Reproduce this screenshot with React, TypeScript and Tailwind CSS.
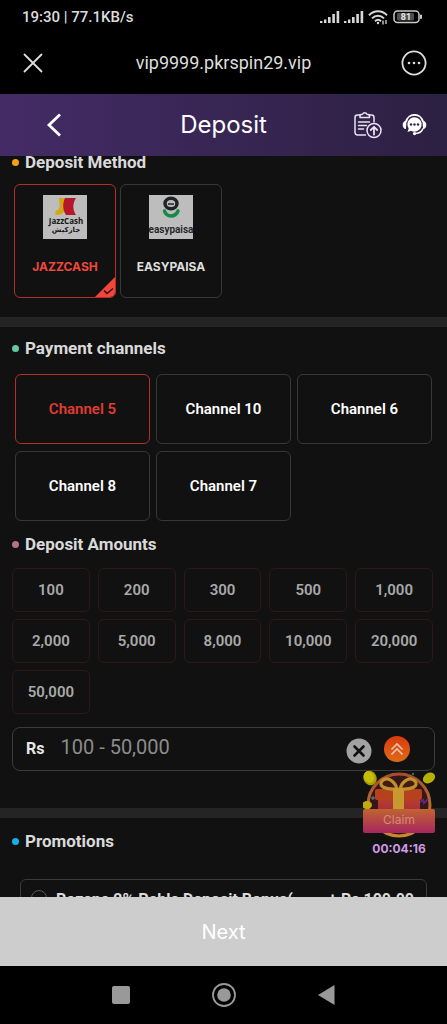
import { useState } from 'react';

const channels = ['Channel 5', 'Channel 10', 'Channel 6', 'Channel 8', 'Channel 7'];

const amounts = [100, 200, 300, 500, 1000, 2000, 5000, 8000, 10000, 20000, 50000];

function SignalIcon() {
  return (
    <svg width="20" height="14" viewBox="0 0 20 14" fill="#d8d8d8">
      <rect x="0" y="11" width="2.4" height="2" />
      <rect x="4" y="9.5" width="2.4" height="3.5" />
      <rect x="8" y="7" width="2.6" height="6" />
      <rect x="12.3" y="4" width="2.6" height="9" />
      <rect x="16.6" y="1" width="2.6" height="12" />
    </svg>
  );
}

function StatusBar() {
  return (
    <div className="flex h-9 items-center justify-between bg-black pr-6 pb-[2px] pl-[22px]">
      <span className="text-[15px] font-medium text-[#dcdcdc]">19:30 | 77.1KB/s</span>
      <div className="flex items-center gap-1">
        <SignalIcon />
        <SignalIcon />
        <svg width="20" height="15" viewBox="0 0 20 15" fill="none" stroke="#d8d8d8" strokeWidth="2">
          <path d="M1 5.2C6-.2 14-.2 19 5.2" />
          <path d="M4 8.4c3.5-3.6 8.500-3.600 12 0" />
          <path d="M7 11.300c1.800-1.800 4.200-1.800 6 0" />
          <circle cx="10" cy="13" r="1.200" fill="#d8d8d8" stroke="none" />
          <path d="M15 10.500v4M18 10v4" strokeWidth="1.300" />
        </svg>
        <svg className="ml-px" width="30" height="14" viewBox="0 0 30 14" fill="none">
          <rect x="1" y="1" width="25" height="11.500" rx="3.500" stroke="#c9c9c9" strokeWidth="1.500" />
          <rect x="4" y="3" width="17" height="7.500" rx="1.500" fill="#505050" />
          <path d="M28 4.800v4" stroke="#c9c9c9" strokeWidth="2" />
          <text x="13" y="10" textAnchor="middle" fontSize="9" fontWeight="700" fill="#e5e5e5">81</text>
        </svg>
      </div>
    </div>
  );
}

function BrowserBar() {
  return (
    <div className="flex h-[58px] items-center justify-between bg-black px-5 pb-1 text-[#dedede]">
      <button aria-label="Close" className="flex size-[26px] items-center justify-center">
        <svg width="20" height="20" viewBox="0 0 20 20" stroke="currentColor" strokeWidth="1.800" strokeLinecap="round">
          <path d="M1.500 1.500l17 17M18.500 1.500l-17 17" />
        </svg>
      </button>
      <span className="text-lg">vip9999.pkrspin29.vip</span>
      <button aria-label="More" className="flex size-[26px] items-center justify-center">
        <svg width="26" height="26" viewBox="0 0 26 26" fill="none" stroke="currentColor" strokeWidth="1.800">
          <circle cx="13" cy="13" r="11.600" />
          <g fill="currentColor" stroke="none">
            <circle cx="8" cy="13" r="1.300" />
            <circle cx="13" cy="13" r="1.300" />
            <circle cx="18" cy="13" r="1.300" />
          </g>
        </svg>
      </button>
    </div>
  );
}

function Header() {
  return (
    <header className="grid h-[62px] grid-cols-[1fr_auto_1fr] items-center bg-linear-to-r from-[#442b66] to-[#2c2042] px-5 text-white">
      <button aria-label="Back" className="ml-5 flex size-7 items-center justify-center">
        <svg width="16" height="24" viewBox="0 0 16 24" fill="none" stroke="currentColor" strokeWidth="2.800">
          <path d="M14 1.500L3 12l11 10.500" />
        </svg>
      </button>
      <h1 className="font-[Inter,sans-serif] text-2xl">Deposit</h1>
      <div className="flex items-center justify-end gap-4">
        <button aria-label="Deposit records" className="px-1">
          <svg width="28" height="28" viewBox="0 0 28 28" fill="none" stroke="#e8e3f2" strokeWidth="1.500" strokeLinecap="round" strokeLinejoin="round">
            <path d="M6 4H3.500A2.500 2.500 0 0 0 1 6.500v15A2.500 2.500 0 0 0 3.500 24h8" />
            <path d="M15 4h2.500A2.500 2.500 0 0 1 20 6.500V11" />
            <path d="M6 6.500h9.500V3.800l-2.600-.5a2.300 2.300 0 0 0-4.300 0L6 3.800z" />
            <path d="M4.500 11h11M4.500 14.500h8M4.500 18h5" />
            <circle cx="20" cy="19.500" r="7" />
            <path d="M20 23.500v-7.500M16.800 19l3.200-3.200 3.200 3.200" strokeWidth="1.800" />
          </svg>
        </button>
        <button aria-label="Support">
          <svg width="25" height="22" viewBox="0 0 25 22" fill="none">
            <path d="M4 8C6-1.500 19-1.500 21 8" stroke="#fff" strokeWidth="1.800" />
            <path d="M4.500 6.500C-.5 6.500-.5 15 4 15zM20.500 6.500c5 0 5 8.500.5 8.500z" fill="#fff" />
            <path d="M12.500 3.200a7.200 7.200 0 1 1-3.500 13.500L5.500 18l1.200-3.600A7.200 7.200 0 0 1 12.500 3.200z" fill="#fff" />
            <path d="M21 14.500c-1 3-4 5-8.500 5" stroke="#fff" strokeWidth="1.500" />
            <circle cx="12.500" cy="19.600" r="1.600" fill="#fff" />
            <g fill="#32244c">
              <circle cx="9" cy="10.500" r="1.200" />
              <circle cx="12.500" cy="10.500" r="1.200" />
              <circle cx="16" cy="10.500" r="1.200" />
            </g>
          </svg>
        </button>
      </div>
    </header>
  );
}

function JazzCashLogo() {
  return (
    <svg width="44" height="44" viewBox="0 0 44 44">
      <rect width="44" height="44" fill="#bdbdbd" />
      <path d="M16 3h6.500c1.500 5 1 10-1 13-2 3-5 4-9 4v-4c3.500-1 4.500-3.500 4-7z" fill="#d3a715" />
      <path d="M22 3h11c-3.500 5.500-3.500 11.500 0 17H23c-3.500-5-3.500-11.500-1-17z" fill="#b5172c" />
      <text x="23" y="29" textAnchor="middle" fontSize="8" fontWeight="700" fill="#151515" fontFamily="Open Sans, sans-serif">JazzCash</text>
      <text x="23" y="37" textAnchor="middle" fontSize="7" fontWeight="700" fill="#151515" fontFamily="DejaVu Sans, sans-serif">جازكيش</text>
    </svg>
  );
}

function EasypaisaLogo() {
  return (
    <svg width="44" height="44" viewBox="0 0 44 44">
      <rect width="44" height="44" fill="#bdbdbd" />
      <ellipse cx="22" cy="8.500" rx="6" ry="5.300" fill="none" stroke="#202426" strokeWidth="3.500" />
      <path d="M19 9h6" stroke="#202426" strokeWidth="1.500" />
      <path d="M15.500 16c2 6.500 11 6.500 13.500 0" fill="none" stroke="#178a48" strokeWidth="3.500" strokeLinecap="round" />
      <text x="22" y="38" textAnchor="middle" fontSize="10" fontWeight="600" fill="#202426" fontFamily="Roboto, sans-serif">easypaisa</text>
    </svg>
  );
}

const methods = [
  { id: 'jazzcash', name: 'JAZZCASH', Logo: JazzCashLogo },
  { id: 'easypaisa', name: 'EASYPAISA', Logo: EasypaisaLogo },
];

function SectionTitle({ dot, children }: { dot: string; children: string }) {
  return (
    <h2 className="flex items-center gap-[6px] px-3 text-[17px] leading-7 font-bold text-[#dadada]">
      <span className={`mt-px size-[7px] rounded-full ${dot}`} />
      {children}
    </h2>
  );
}

function ClaimGift() {
  return (
    <button className="absolute right-3 bottom-10 flex w-[72px] flex-col items-center">
      <svg width="72" height="71" viewBox="1 0 72 71">
        <defs>
          <linearGradient id="ring" x1="0" y1="0" x2="0" y2="1">
            <stop offset="0" stopColor="#a54e2c" />
            <stop offset="1" stopColor="#c88a2c" />
          </linearGradient>
          <linearGradient id="box" x1="0" y1="0" x2="0" y2="1">
            <stop offset="0" stopColor="#b5481f" />
            <stop offset="1" stopColor="#ac2448" />
          </linearGradient>
          <linearGradient id="banner" x1="0" y1="0" x2="0" y2="1">
            <stop offset="0" stopColor="#bf6430" />
            <stop offset="1" stopColor="#a92660" />
          </linearGradient>
        </defs>
        <circle cx="37" cy="35" r="31" fill="#371619" stroke="url(#ring)" strokeWidth="3" />
        <path d="M58 32l3-2 1 3 4-4" stroke="#5a2a80" strokeWidth="2" fill="none" />
        <rect x="16" y="24" width="42" height="22" fill="url(#box)" />
        <rect x="13" y="19" width="47" height="11" rx="2" fill="#b5411f" />
        <path d="M35 19C23 20 16 16 20 11c5-5 13 0 15 8zM38 19c12 1 19-3 15-8-5-5-13 0-15 8z" fill="#451a15" stroke="#bd922c" strokeWidth="3.200" />
        <rect x="31" y="18" width="11" height="28" fill="#c7992e" />
        <ellipse cx="8" cy="8" rx="6.500" ry="7.500" transform="rotate(-25 8 8)" fill="#a9a000" />
        <ellipse cx="7" cy="7" rx="5" ry="6" transform="rotate(-25 7 7)" fill="#c5bd08" />
        <ellipse cx="67" cy="8" rx="6.500" ry="5" transform="rotate(-35 67 8)" fill="#b8af04" />
        <ellipse cx="5" cy="35" rx="5" ry="4" fill="#c1ab08" />
        <path d="M9 28h4M11 26v4" stroke="#4f94a0" />
        <circle cx="51" cy="4" r="1.200" fill="#38704a" />
        <rect x="1" y="39" width="72" height="24" rx="2" fill="url(#banner)" />
        <text x="37" y="54" textAnchor="middle" fontSize="12" fill="#d68c72" fontFamily="Inter, sans-serif">Claim</text>
      </svg>
      <span className="font-[Inter,sans-serif] text-xs leading-4 font-bold text-[#cf9be6]">00:04:16</span>
    </button>
  );
}

export default function App() {
  const [method, setMethod] = useState('jazzcash');
  const [channel, setChannel] = useState('Channel 5');
  const [amount, setAmount] = useState('');

  return (
    <div className="flex h-screen flex-col bg-black font-[Roboto,sans-serif]">
      <StatusBar />
      <BrowserBar />
      <Header />

      <div className="relative min-h-0 flex-1 bg-[#111111]">
        <main className="h-full overflow-y-auto [scrollbar-width:none]">
          {/* Deposit method */}
          <section className="-mt-2 border-b-10 border-[#242424] pb-[19px]">
            <SectionTitle dot="bg-[#f5a30f]">Deposit Method</SectionTitle>
            <div className="mt-2 flex gap-1 px-[14px]">
              {methods.map(({ id, name, Logo }) => (
                <button
                  key={id}
                  onClick={() => setMethod(id)}
                  className={`relative flex h-[114px] w-[102px] flex-col items-center gap-5 overflow-hidden rounded-md border pt-[10px] font-[Inter,sans-serif] text-xs leading-4 font-bold ${
                    method === id ? 'border-[#b12f28] text-[#f0463c]' : 'border-[#383838] text-[#dedede]'
                  }`}
                >
                  <Logo />
                  {name}
                  {method === id && (
                    <svg className="absolute right-0 bottom-0" width="20" height="20" viewBox="0 0 20 20" fill="none">
                      <path d="M20 0v20H0z" fill="#f0463c" />
                      <path d="M9 13.500l3 3 6-5" stroke="#2a1010" strokeWidth="1.500" />
                    </svg>
                  )}
                </button>
              ))}
            </div>
          </section>

          {/* Channels and amounts */}
          <section className="border-b-10 border-[#242424] pt-[7px] pb-[37px]">
            <SectionTitle dot="bg-[#62c9a3]">Payment channels</SectionTitle>
            <div className="mt-3 grid grid-cols-3 gap-x-[6px] gap-y-[7px] px-[15px]">
              {channels.map((name) => (
                <button
                  key={name}
                  onClick={() => setChannel(name)}
                  className={`h-[70px] rounded-md border text-[15px] font-semibold ${
                    channel === name ? 'border-[#b12f28] text-[#e03c32]' : 'border-[#383838] text-white'
                  }`}
                >
                  {name}
                </button>
              ))}
            </div>

            <div className="pt-[9px]">
              <SectionTitle dot="bg-[#b5718c]">Deposit Amounts</SectionTitle>
            </div>
            <div className="mt-[10px] grid grid-cols-5 gap-x-2 gap-y-[7px] pr-[14px] pl-3">
              {amounts.map((value) => (
                <button
                  key={value}
                  onClick={() => setAmount(String(value))}
                  className="h-11 rounded-md border border-[#2f1718] text-[15px] font-semibold text-[#a9a9a9]"
                >
                  {value.toLocaleString('en-US')}
                </button>
              ))}
            </div>

            <div className="mx-3 mt-[13px] flex h-11 items-center rounded-lg border border-[#3b3b3b] pr-6 pl-[13px]">
              <label htmlFor="amount" className="text-base font-bold text-[#e8e8e8]">Rs</label>
              <input
                id="amount"
                value={amount}
                onChange={(e) => setAmount(e.target.value)}
                placeholder="100 - 50,000"
                className="ml-4 w-0 flex-1 pb-1 text-xl text-[#e8e8e8] outline-none placeholder:text-[#8c8c8c]"
              />
              <button aria-label="Clear amount" onClick={() => setAmount('')} className="mt-1">
                <svg width="26" height="26" viewBox="0 0 26 26">
                  <circle cx="13" cy="13" r="12.500" fill="#a2a2a2" />
                  <path d="M8.500 8.500l9 9M17.500 8.500l-9 9" stroke="#111" strokeWidth="2.600" strokeLinecap="round" />
                </svg>
              </button>
              <button aria-label="Back to top" className="ml-3">
                <svg width="26" height="26" viewBox="0 0 26 26" fill="none">
                  <defs>
                    <linearGradient id="up" x1="0" y1="0" x2="0" y2="1">
                      <stop offset="0" stopColor="#dc3a0c" />
                      <stop offset="1" stopColor="#dc6b18" />
                    </linearGradient>
                  </defs>
                  <circle cx="13" cy="13" r="13" fill="url(#up)" />
                  <path d="M7.500 13.500L13 8l5.500 5.500M7.500 18.500L13 13l5.500 5.500" stroke="#e9c4b4" strokeWidth="1.600" />
                </svg>
              </button>
            </div>
          </section>

          {/* Promotions */}
          <section className="pt-[9px] pb-5">
            <SectionTitle dot="bg-[#17b0e5]">Promotions</SectionTitle>
            <label className="mx-5 mt-6 flex h-16 items-start rounded-md border border-[#3b3b3b] pt-[10px] pr-3 pl-[10px] text-base leading-5 font-bold text-[#dadada]">
              <input type="radio" name="promotion" className="size-4 appearance-none rounded-full border border-[#555555]" />
              <span className="ml-[9px] flex-1">Rozana 2% Pehla Deposit Bonus(</span>
              <span>+ Rs 100.00</span>
            </label>
          </section>
        </main>
        <ClaimGift />
      </div>

      <button className="h-[69px] bg-[#cdcdcd] font-[Inter,sans-serif] text-xl text-white">Next</button>

      <nav className="flex h-[58px] items-center justify-center gap-20 bg-black">
        <button aria-label="Recent apps" className="flex w-[22px] justify-center">
          <svg width="18" height="18" viewBox="0 0 18 18">
            <rect width="18" height="18" rx="2" fill="#999" />
          </svg>
        </button>
        <button aria-label="Home">
          <svg width="24" height="24" viewBox="0 0 24 24">
            <circle cx="12" cy="12" r="11" fill="none" stroke="#999" strokeWidth="1.800" />
            <circle cx="12" cy="12" r="6.800" fill="#999" />
          </svg>
        </button>
        <button aria-label="Back" className="flex w-[22px] justify-center">
          <svg width="17" height="20" viewBox="0 0 17 20">
            <path d="M16.500 0v20L0 10z" fill="#999" />
          </svg>
        </button>
      </nav>
    </div>
  );
}
